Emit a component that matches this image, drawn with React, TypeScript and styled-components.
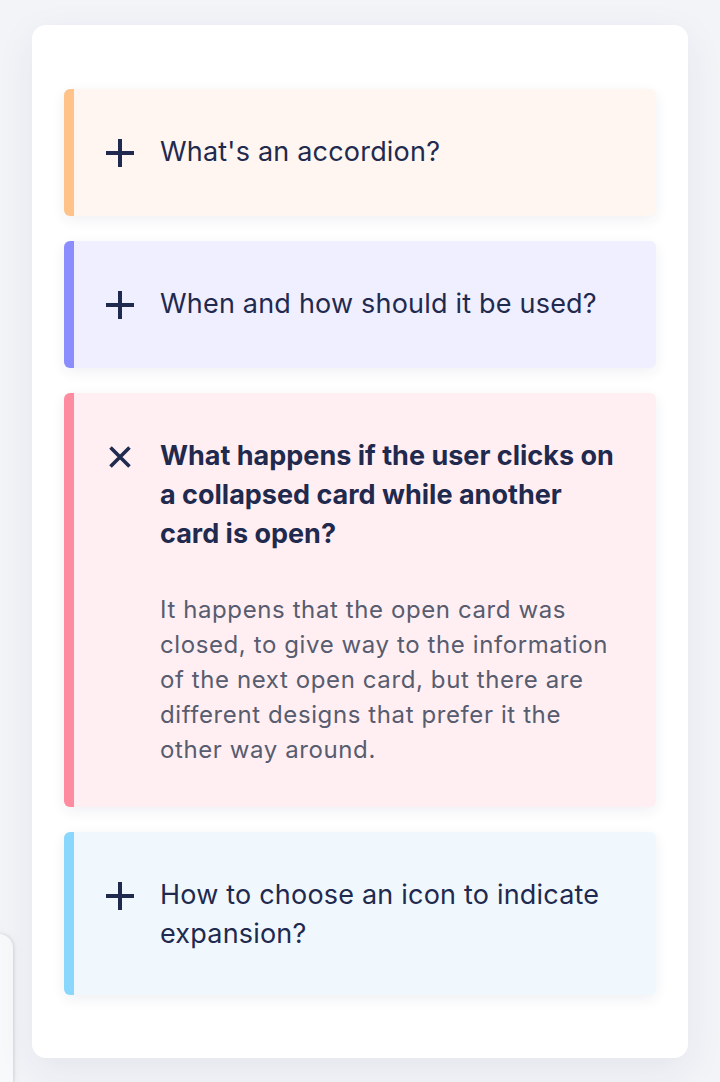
import React, { useState } from 'react';
import styled, { createGlobalStyle } from 'styled-components';

const GlobalStyle = createGlobalStyle`
  html, body {
    margin: 0;
    padding: 0;
    background: #f3f4f8;
    font-family: Inter, "Noto Sans", "DejaVu Sans", sans-serif;
    overflow: hidden;
  }
  * { box-sizing: border-box; }
`;

const Page = styled.div`
  height: 1082px;
  padding: 25px 32px 24px;
  position: relative;
  overflow: hidden;
`;

const SidePeek = styled.div`
  position: absolute;
  left: -200px;
  top: 934px;
  width: 213px;
  height: 160px;
  background: #f8f9fb;
  border-radius: 14px;
  box-shadow: 1px 0 3px rgba(20, 30, 60, 0.12), 0 0 12px rgba(20, 30, 60, 0.05);
`;

const Panel = styled.div`
  background: #ffffff;
  border-radius: 14px;
  padding: 64px 32px 63px;
  display: flex;
  flex-direction: column;
  gap: 25px;
  box-shadow: 0 12px 40px rgba(30, 40, 80, 0.07);
  position: relative;
`;

const Card = styled.div<{ $accent: string; $bg: string; $open: boolean }>`
  background: ${(p) => p.$bg};
  border-left: 10px solid ${(p) => p.$accent};
  border-radius: 6px;
  padding: 42px 40px ${(p) => (p.$open ? '40px' : '42px')} 32px;
  box-shadow: 0 4px 14px rgba(30, 40, 80, 0.07);
  cursor: pointer;
`;

const Header = styled.div`
  display: flex;
  align-items: flex-start;
  gap: 26px;
`;

const IconBox = styled.div`
  flex: 0 0 28px;
  height: 43px;
  display: flex;
  align-items: center;
  justify-content: center;
  color: #1f2a4e;
`;

const Question = styled.h3<{ $open: boolean }>`
  margin: 0;
  padding-top: 1px;
  font-size: 27px;
  line-height: 39px;
  font-weight: ${(p) => (p.$open ? 700 : 400)};
  color: #1f2a4e;
  letter-spacing: ${(p) => (p.$open ? '0' : '0.2px')};
`;

const Answer = styled.p`
  margin: 39px 0 0 54px;
  font-size: 24px;
  line-height: 35px;
  letter-spacing: 0.6px;
  color: #575c6f;
`;

const PlusIcon = () => (
  <svg width="28" height="28" viewBox="0 0 28 28" fill="none">
    <path d="M14 0V28M0 14H28" stroke="currentColor" strokeWidth="4" />
  </svg>
);

const CloseIcon = () => (
  <svg width="22" height="22" viewBox="0 0 22 22" fill="none">
    <path d="M1.5 1.5L20.5 20.5M20.5 1.5L1.5 20.5" stroke="currentColor" strokeWidth="3.6" />
  </svg>
);

const items = [
  {
    q: "What's an accordion?",
    a: 'An accordion is a vertically stacked list of headers that reveal or hide associated sections of content.',
    accent: '#ffc389',
    bg: '#fff6f1',
  },
  {
    q: 'When and how should it be used?',
    a: 'Use it when you need to show a lot of information in a small space, letting users open only what interests them.',
    accent: '#8b8dfe',
    bg: '#f0efff',
  },
  {
    q: 'What happens if the user clicks on a collapsed card while another card is open?',
    a: 'It happens that the open card was closed, to give way to the information of the next open card, but there are different designs that prefer it the other way around.',
    accent: '#ff8ba0',
    bg: '#ffeff3',
  },
  {
    q: 'How to choose an icon to indicate expansion?',
    a: 'Pick an icon that clearly changes between the two states, like a plus that turns into a cross.',
    accent: '#8ad7fe',
    bg: '#f0f8fe',
  },
];

export default function App() {
  const [open, setOpen] = useState<number | null>(2);

  return (
    <>
      <GlobalStyle />
      <Page>
        <SidePeek />
        <Panel>
          {items.map((item, i) => {
            const isOpen = open === i;
            return (
              <Card
                key={item.q}
                $accent={item.accent}
                $bg={item.bg}
                $open={isOpen}
                onClick={() => setOpen(isOpen ? null : i)}
              >
                <Header>
                  <IconBox>{isOpen ? <CloseIcon /> : <PlusIcon />}</IconBox>
                  <Question $open={isOpen}>{item.q}</Question>
                </Header>
                {isOpen && <Answer>{item.a}</Answer>}
              </Card>
            );
          })}
        </Panel>
      </Page>
    </>
  );
}
